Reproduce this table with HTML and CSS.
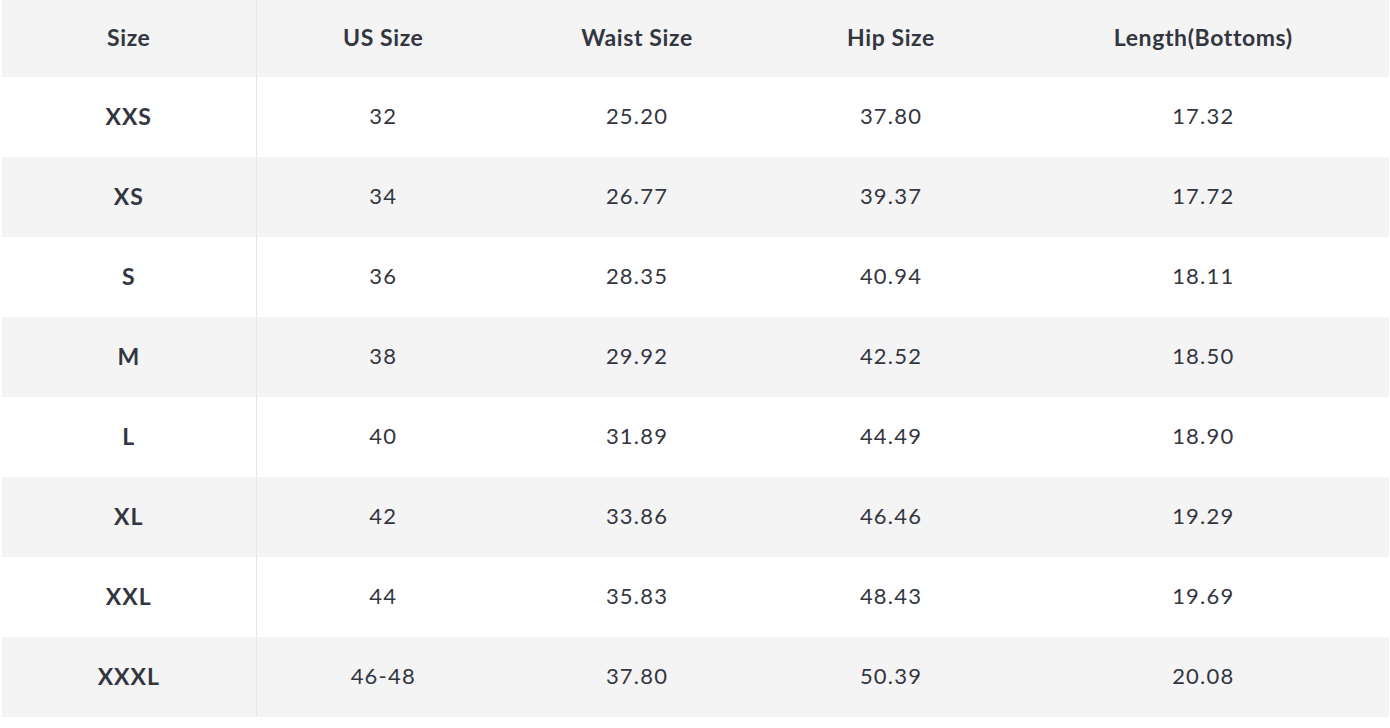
FILE: index.html
```html
<!DOCTYPE html>
<html>
<head>
<meta charset="utf-8">
<link rel="stylesheet" href="styles.css">
</head>
<body>
<table class="size-table">
  <colgroup>
    <col class="c-size"><col class="c-mid"><col class="c-mid"><col class="c-mid"><col>
  </colgroup>
  <thead>
    <tr><th class="first">Size</th><th>US Size</th><th>Waist Size</th><th>Hip Size</th><th>Length(Bottoms)</th></tr>
  </thead>
  <tbody>
    <tr><th class="first">XXS</th><td>32</td><td>25.20</td><td>37.80</td><td>17.32</td></tr>
    <tr><th class="first">XS</th><td>34</td><td>26.77</td><td>39.37</td><td>17.72</td></tr>
    <tr><th class="first">S</th><td>36</td><td>28.35</td><td>40.94</td><td>18.11</td></tr>
    <tr><th class="first">M</th><td>38</td><td>29.92</td><td>42.52</td><td>18.50</td></tr>
    <tr><th class="first">L</th><td>40</td><td>31.89</td><td>44.49</td><td>18.90</td></tr>
    <tr><th class="first">XL</th><td>42</td><td>33.86</td><td>46.46</td><td>19.29</td></tr>
    <tr><th class="first">XXL</th><td>44</td><td>35.83</td><td>48.43</td><td>19.69</td></tr>
    <tr><th class="first">XXXL</th><td>46-48</td><td>37.80</td><td>50.39</td><td>20.08</td></tr>
  </tbody>
</table>
</body>
</html>
```
FILE: styles.css
```css
html, body {
  margin: 0;
  padding: 0;
  background: #ffffff;
}
body {
  padding: 0 1px 0 2px;
  font-family: Lato, "Noto Sans", sans-serif;
  color: #33363f;
}
.size-table {
  width: 100%;
  border-collapse: collapse;
  table-layout: fixed;
}
.c-size { width: 254px; }
.c-mid { width: 254px; }
.size-table th,
.size-table td {
  text-align: center;
  vertical-align: middle;
  height: 80px;
  padding: 0 0 3px;
  box-sizing: border-box;
}
.size-table thead th {
  height: 77px;
  font-size: 23px;
  font-weight: 700;
  letter-spacing: 0.6px;
}
.size-table thead tr,
.size-table tbody tr:nth-child(even) {
  background: #f4f4f5;
}
.size-table tbody th {
  font-size: 23px;
  font-weight: 700;
  letter-spacing: 1px;
}
.size-table td {
  font-size: 22px;
  font-weight: 400;
  letter-spacing: 1.2px;
}
.size-table .first {
  border-right: 1px solid #e6e6e8;
}
```
